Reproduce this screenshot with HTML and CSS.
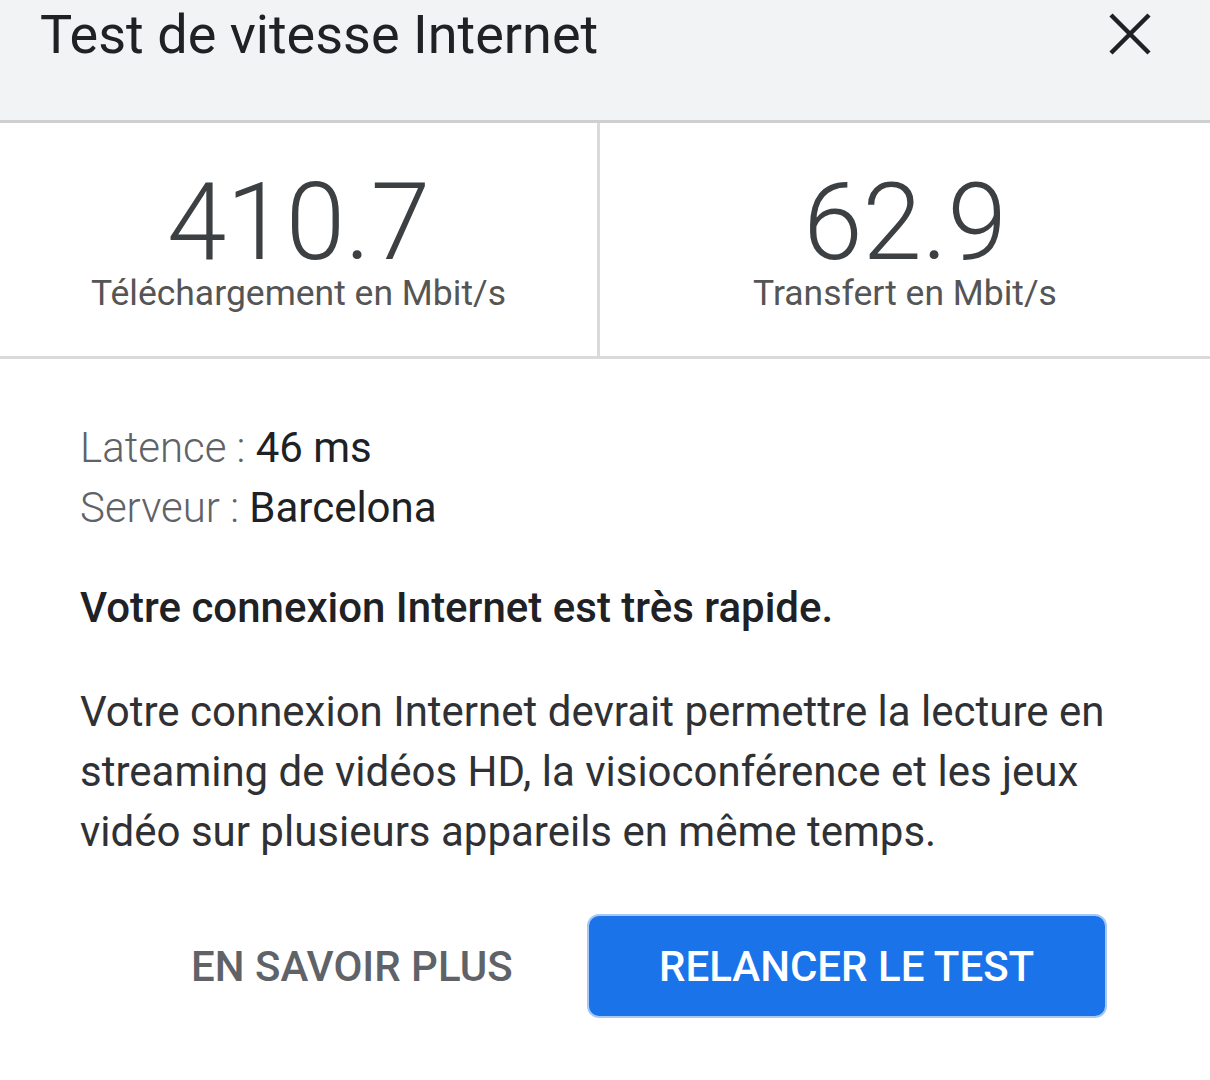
FILE: index.html
```html
<!DOCTYPE html>
<html lang="fr">
<head>
    <meta charset="UTF-8">
    <meta name="viewport" content="width=device-width, initial-scale=1.0">
    <title>Test de vitesse Internet</title>
    <link rel="stylesheet" href="styles.css">
</head>
<body>
    <div class="header">
        <h1>Test de vitesse Internet</h1>
        <button class="close" aria-label="Fermer">
            <svg width="44" height="44" viewBox="0 0 44 44">
                <path d="M3 3 L41 41 M41 3 L3 41" stroke="#202124" stroke-width="4.5" fill="none"/>
            </svg>
        </button>
    </div>
    <div class="stats">
        <div class="stat">
            <div class="value">410.7</div>
            <div class="unit">Téléchargement en Mbit/s</div>
        </div>
        <div class="stat">
            <div class="value">62.9</div>
            <div class="unit">Transfert en Mbit/s</div>
        </div>
    </div>
    <div class="details">
        <div class="info">
            <div><span class="key">Latence : </span><span class="val">46 ms</span></div>
            <div><span class="key">Serveur : </span><span class="val">Barcelona</span></div>
        </div>
        <p class="verdict">Votre connexion Internet est très rapide.</p>
        <p class="desc">Votre connexion Internet devrait permettre la lecture en streaming de vidéos HD, la visioconférence et les jeux vidéo sur plusieurs appareils en même temps.</p>
        <div class="actions">
            <button class="link-btn">EN SAVOIR PLUS</button>
            <button class="main-btn">RELANCER LE TEST</button>
        </div>
    </div>
</body>
</html>
```
FILE: styles.css
```css
body {
    font-family: Roboto, "Noto Sans", sans-serif;
    background-color: #ffffff;
    margin: 0;
    padding: 0;
    color: #202124;
}
.header {
    height: 120px;
    background-color: #f1f3f4;
    border-bottom: 3px solid #cfcfcf;
    display: flex;
    justify-content: space-between;
    align-items: flex-start;
    padding: 0 58px 0 40px;
}
h1 {
    font-size: 54px;
    font-weight: 400;
    margin: 0;
    line-height: 70px;
    color: #202124;
}
.close {
    background: none;
    border: none;
    padding: 0;
    margin-top: 12px;
    cursor: pointer;
}
.stats {
    display: grid;
    grid-template-columns: 600px 1fr;
    border-bottom: 3px solid #dadada;
}
.stat {
    height: 233px;
    display: flex;
    flex-direction: column;
    align-items: center;
    padding-top: 52px;
    box-sizing: border-box;
}
.stat:first-child {
    border-right: 3px solid #dadada;
}
.value {
    font-size: 107px;
    font-weight: 300;
    color: #3c4043;
    line-height: 96px;
}
.unit {
    font-size: 35.5px;
    color: #555555;
    line-height: 40px;
    margin-top: 2px;
}
.details {
    padding: 59px 80px 0 80px;
}
.info {
    font-size: 42px;
    line-height: 60px;
}
.key {
    font-weight: 300;
    color: #5f6368;
}
.val {
    color: #202124;
}
.verdict {
    font-size: 42px;
    font-weight: 500;
    margin: 40px 0 0 0;
    line-height: 60px;
}
.desc {
    font-size: 42px;
    color: #303134;
    line-height: 60px;
    margin: 44px 0 0 0;
}
.actions {
    display: flex;
    align-items: center;
    margin-top: 52px;
    padding-left: 111px;
    gap: 74px;
}
button {
    font-family: Roboto, "Noto Sans", sans-serif;
}
.link-btn {
    background: none;
    border: none;
    font-size: 42px;
    font-weight: 500;
    color: #5f6368;
    padding: 0;
}
.main-btn {
    width: 520px;
    height: 104px;
    background-color: #1a73e8;
    color: #ffffff;
    font-size: 42px;
    font-weight: 500;
    border: 2px solid #a9c8f4;
    border-radius: 12px;
}
```
